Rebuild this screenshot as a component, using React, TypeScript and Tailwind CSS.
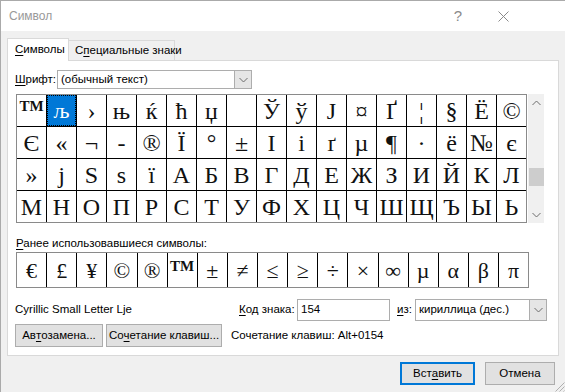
import React from "react";

const ui = { fontFamily: '"Liberation Sans", Arial, sans-serif' };
const serif = { fontFamily: '"Liberation Serif", "Times New Roman", serif' };

const chars = [
  "™", "љ", "›", "њ", "ќ", "ћ", "џ", "\u00a0", "Ў", "ў", "Ј", "¤", "Ґ", "¦", "§", "Ё", "©",
  "Є", "«", "¬", "-", "®", "Ї", "°", "±", "І", "і", "ґ", "µ", "¶", "·", "ё", "№", "є",
  "»", "ј", "Ѕ", "ѕ", "ї", "А", "Б", "В", "Г", "Д", "Е", "Ж", "З", "И", "Й", "К", "Л",
  "М", "Н", "О", "П", "Р", "С", "Т", "У", "Ф", "Х", "Ц", "Ч", "Ш", "Щ", "Ъ", "Ы", "Ь",
];

const recent = ["€", "£", "¥", "©", "®", "™", "±", "≠", "≤", "≥", "÷", "×", "∞", "µ", "α", "β", "π"];

const Chevron = ({ up = false }: { up?: boolean }) => (
  <svg width="9" height="6" viewBox="0 0 9 6" fill="none" stroke="#6d6d6d" strokeWidth="1">
    {up ? <path d="M0.5 5L4.5 1L8.5 5" /> : <path d="M0.5 1L4.5 5L8.5 1" />}
  </svg>
);

const U = ({ children }: { children: React.ReactNode }) => <span className="underline underline-offset-2">{children}</span>;

const DropButton = () => (
  <div className="flex w-[17px] items-center justify-center self-stretch border-l border-[#adadad] bg-[#e5e5e5]">
    <Chevron />
  </div>
);

const App = () => {
  return (
    <div
      className="relative flex h-[392px] w-[565px] flex-col overflow-hidden whitespace-nowrap border-l border-t border-[#aaaaaa] bg-[#f0f0f0] text-[11.5px] text-black"
      style={ui}
    >
      {/* title bar */}
      <div className="flex h-[30px] items-center bg-white pl-[8px] pr-[56px]">
        <span className="text-[12px] text-[#999999]">Символ</span>
        <span className="ml-auto text-[15px] text-[#8a8a8a]">?</span>
        <svg className="ml-[36px]" width="11" height="11" viewBox="0 0 11 11" stroke="#8a8a8a" strokeWidth="1">
          <path d="M0.5 0.5L10.5 10.5M10.5 0.5L0.5 10.5" />
        </svg>
      </div>

      {/* tabs */}
      <div className="flex items-end pl-[6px] pt-[7px]">
        <div className="relative z-10 -mb-px flex h-[23px] w-[62px] items-center border border-b-0 border-[#d9d9d9] bg-white pl-[7px]">
          <U>С</U>имволы
        </div>
        <div className="flex h-[20px] w-[106px] items-center border border-b-0 border-l-0 border-[#d9d9d9] pl-[6px]">
          С<U>п</U>ециальные знаки
        </div>
      </div>

      {/* panel */}
      <div className="mx-[6px] flex h-[296px] flex-col border border-[#d9d9d9] bg-white pl-[8px] pt-[9px]">
        <div className="flex h-[19px] items-center">
          <span className="-ml-px w-[42px]">
            <U>Ш</U>рифт:
          </span>
          <div className="flex h-[19px] w-[195px] items-center border border-[#adadad]">
            <span className="flex-1 pl-[3px]">(обычный текст)</span>
            <DropButton />
          </div>
        </div>

        <div className="mt-[5px] flex">
          <div className="grid grid-cols-[repeat(17,29px)] gap-px border border-[#8a8a8a] bg-black" style={serif}>
            {chars.map((c, i) => (
              <div
                key={i}
                className={
                  i === 1
                    ? "flex h-[31px] items-center justify-center border border-dotted border-black bg-[#0078d7] text-[22px] text-white"
                    : "flex h-[31px] items-center justify-center bg-white text-[24px] leading-none text-[#111111]"
                }
              >
                {i === 0 ? <span className="-mt-[9px] text-[15px] font-bold">TM</span> : c}
              </div>
            ))}
          </div>
          <div className="ml-px flex h-[129px] w-[16px] flex-col items-center bg-[#f0f0f0]">
            <div className="flex h-[17px] items-center">
              <Chevron up />
            </div>
            <div className="mt-[57px] h-[18px] w-[15px] bg-[#cdcdcd]" />
            <div className="mt-auto flex h-[17px] items-center">
              <Chevron />
            </div>
          </div>
        </div>

        <div className="mt-[12px] h-[16px] leading-[16px]">
          <U>Р</U>анее использовавшиеся символы:
        </div>
        <div className="mt-px flex h-[36px] w-[513px] border border-[#8a8a8a]" style={serif}>
          {recent.map((c, i) => (
            <div
              key={i}
              className={
                "flex flex-1 items-center justify-center text-[22px] text-[#111111] " +
                (i < recent.length - 1 ? "border-r border-black" : "")
              }
            >
              {c === "™" ? <span className="-mt-[8px] text-[15px] font-bold">TM</span> : c}
            </div>
          ))}
        </div>

        <div className="mt-[11px] flex h-[22px] items-center">
          <span className="-ml-px w-[224px]">Cyrillic Small Letter Lje</span>
          <span className="w-[58px]">
            <U>К</U>од знака:
          </span>
          <div className="flex h-[22px] w-[93px] items-center border border-[#adadad] pl-[3px]">154</div>
          <span className="ml-[7px] w-[18px]">
            <U>и</U>з:
          </span>
          <div className="flex h-[22px] w-[132px] items-center border border-[#adadad]">
            <span className="flex-1 pl-[3px]">кириллица (дес.)</span>
            <DropButton />
          </div>
        </div>

        <div className="mt-[3px] flex h-[23px] items-center">
          <button className="-ml-px flex h-[23px] w-[88px] items-center justify-center border border-[#adadad] bg-[#e1e1e1]">
            Ав<U>т</U>озамена...
          </button>
          <button className="ml-[3px] flex h-[23px] w-[116px] items-center justify-center border border-[#adadad] bg-[#e1e1e1]">
            Со<U>ч</U>етание клавиш...
          </button>
          <span className="ml-[9px]">Сочетание клавиш: Alt+0154</span>
        </div>
      </div>

      {/* footer buttons */}
      <div className="mt-[6px] flex justify-end pr-[10px]">
        <button className="flex h-[23px] w-[75px] items-center justify-center border-2 border-[#0078d7] bg-[#e1e1e1]">
          Вст<U>а</U>вить
        </button>
        <button className="ml-[10px] flex h-[23px] w-[70px] items-center justify-center border border-[#adadad] bg-[#e1e1e1]">
          Отмена
        </button>
      </div>

      <svg className="absolute bottom-0 right-0" width="11" height="11" viewBox="0 0 11 11" stroke="#b0b0b0" strokeWidth="1">
        <path d="M10.5 1.5L1.5 10.5M10.5 5.5L5.5 10.5M10.5 9.5L9.5 10.5" />
      </svg>
    </div>
  );
};

export default App;
